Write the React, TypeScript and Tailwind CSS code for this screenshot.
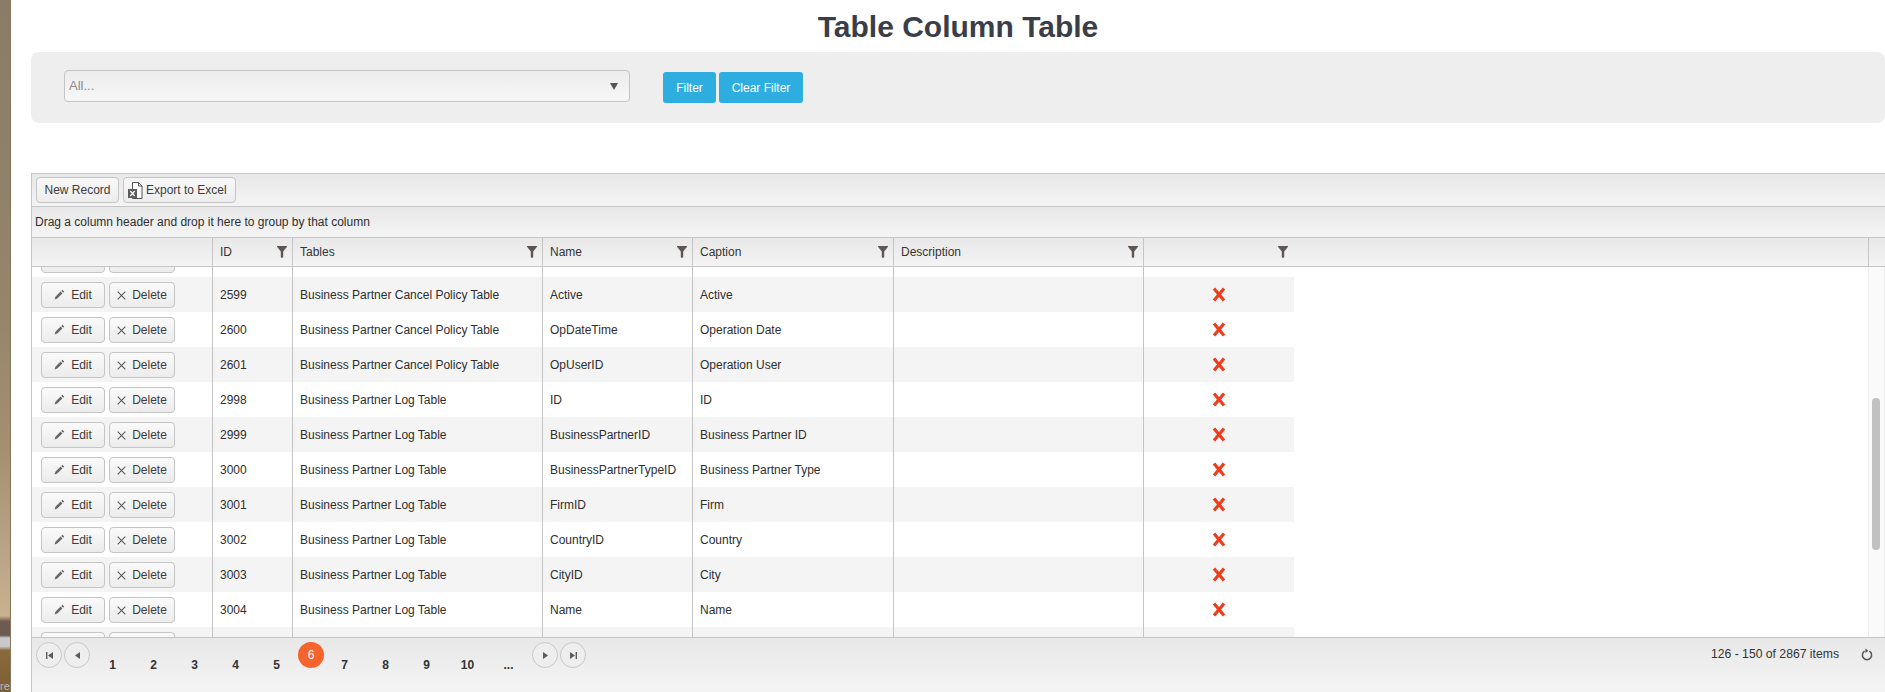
import type { ReactNode } from "react";

const cols = "grid grid-cols-[181px_80px_250px_150px_201px_250px_150px]";
const cellBorder = "border-r border-[#c5c5c5]";
const bar = "bg-gradient-to-b from-[#e9e8e9] to-[#f4f4f4]";

// first and last rows are scrolled almost out of view, only their button edges show
const rows: ([string, string, string, string] | null)[] = [
  null,
  ["2599", "Business Partner Cancel Policy Table", "Active", "Active"],
  ["2600", "Business Partner Cancel Policy Table", "OpDateTime", "Operation Date"],
  ["2601", "Business Partner Cancel Policy Table", "OpUserID", "Operation User"],
  ["2998", "Business Partner Log Table", "ID", "ID"],
  ["2999", "Business Partner Log Table", "BusinessPartnerID", "Business Partner ID"],
  ["3000", "Business Partner Log Table", "BusinessPartnerTypeID", "Business Partner Type"],
  ["3001", "Business Partner Log Table", "FirmID", "Firm"],
  ["3002", "Business Partner Log Table", "CountryID", "Country"],
  ["3003", "Business Partner Log Table", "CityID", "City"],
  ["3004", "Business Partner Log Table", "Name", "Name"],
  null,
];

function FilterIcon() {
  return (
    <svg width="10" height="12" viewBox="0 0 10 12" className="shrink-0">
      <path d="M0 0h10v.8L6.2 5.4V11.2L5 12 3.8 11.2V5.4L0 .8z" fill="#5c5654" />
    </svg>
  );
}

function PencilIcon() {
  return (
    <svg width="11" height="11" viewBox="0 0 11 11" className="shrink-0">
      <path d="M8.4.8l1.8 1.8-1.1 1.1-1.8-1.8zM6.6 2.6l1.8 1.8-5.2 5.2-2.6.8.8-2.6z" fill="#6a6462" />
    </svg>
  );
}

function CrossIcon() {
  return (
    <svg width="9" height="9" viewBox="0 0 9 9" className="shrink-0 translate-y-[1px]">
      <path d="M.7.7l7.6 7.6M8.3.7L.7 8.3" stroke="#5f5a58" strokeWidth="1.1" fill="none" />
    </svg>
  );
}

function RedX() {
  return (
    <svg width="14" height="15" viewBox="0 0 14 15">
      <path d="M2 1.5l5 6 5-6M2 13.5l5-6 5 6" stroke="#ee3d1c" strokeWidth="3.2" fill="none" />
    </svg>
  );
}

function ExcelIcon() {
  return (
    <svg width="15" height="17" viewBox="0 0 15 17" className="shrink-0">
      <path d="M4.5.5h6l3.5 3.5v12.5H4.5z" fill="#fbfbfb" stroke="#555" strokeWidth="1" />
      <path d="M10.5.5V4H14" fill="none" stroke="#555" strokeWidth="1" />
      <rect x="0" y="7" width="9" height="9" fill="#5b5b5b" />
      <path d="M2.3 9l4.4 5M6.7 9l-4.4 5" stroke="#fff" strokeWidth="1.3" fill="none" />
    </svg>
  );
}

function RefreshIcon() {
  return (
    <svg width="12" height="13" viewBox="0 0 12 13">
      <path d="M3.6 3.2A4.6 4.6 0 1 0 8.4 3.2" fill="none" stroke="#5a5553" strokeWidth="1.5" />
      <path d="M4.4 .6l3 2.2-3 2.2z" fill="#5a5553" />
    </svg>
  );
}

function GridButton({ children, width }: { children?: ReactNode; width: string }) {
  return (
    <button className={`${width} flex h-[26px] items-center justify-center gap-[6px] rounded-[4px] border border-[#c5c5c5] bg-gradient-to-b from-[#fafafa] to-[#ececec] text-xs text-[#3c3c3c]`}>
      {children}
    </button>
  );
}

function HeaderCell({ label, last }: { label?: string; last?: boolean }) {
  return (
    <div className={`flex h-full items-center justify-between pl-[7px] ${last ? "pr-[6px]" : `pr-[5px] ${cellBorder}`}`}>
      <span className="text-xs text-[#333]">{label}</span>
      <FilterIcon />
    </div>
  );
}

function Row({ row, striped }: { row: [string, string, string, string] | null; striped: boolean }) {
  const cell = `flex h-[35px] items-center pl-[7px] ${cellBorder}`;
  return (
    <div className={`${cols} w-fit text-xs text-[#2e2e2e] ${striped ? "bg-[#f4f4f4]" : "bg-white"}`}>
      <div className={`flex h-[35px] items-center gap-[4px] pl-[9px] ${cellBorder}`}>
        {row ? (
          <>
            <GridButton width="w-[64px]">
              <PencilIcon />
              Edit
            </GridButton>
            <GridButton width="w-[66px]">
              <CrossIcon />
              Delete
            </GridButton>
          </>
        ) : (
          <>
            <GridButton width="w-[64px]" />
            <GridButton width="w-[66px]" />
          </>
        )}
      </div>
      <div className={cell}>{row?.[0]}</div>
      <div className={cell}>{row?.[1]}</div>
      <div className={cell}>{row?.[2]}</div>
      <div className={cell}>{row?.[3]}</div>
      <div className={cell} />
      <div className="flex h-[35px] items-center justify-center">
        {row && <RedX />}
      </div>
    </div>
  );
}

function PagerArrow({ children }: { children: ReactNode }) {
  return (
    <button className="flex h-[26px] w-[26px] shrink-0 items-center justify-center rounded-full border border-[#c9c9c9] bg-[#eeeeee]">
      {children}
    </button>
  );
}

function PageNumber({ label }: { label: string }) {
  return (
    <span className="flex h-[26px] w-[41px] shrink-0 items-center justify-center pt-[19px] text-xs font-bold text-[#333]">
      {label}
    </span>
  );
}

export default function App() {
  return (
    <div className="flex h-[692px] overflow-hidden bg-white font-['Liberation_Sans',Arial,sans-serif]">
      <div className="flex w-[11px] shrink-0 flex-col justify-end overflow-hidden border-r border-[#85775f] bg-[linear-gradient(180deg,#8a7c66_0%,#94856b_45%,#a4906f_65%,#bda789_82%,#c9b28c_89%,#6d5a50_89.8%,#6d5a50_91.8%,#c9c9c9_92.2%,#c9c9c9_93.4%,#8a6a3a_94%,#7d5f34_100%)]">
        <span className="text-[11px] leading-[12px] text-[#bbb]">re</span>
      </div>

      <div className="flex min-w-0 flex-1 flex-col pl-[20px]">
        <h1 className="h-[52px] shrink-0 pt-[9px] text-center text-[30px] font-bold leading-[36px] text-[#3a3e49]">
          Table Column Table
        </h1>

        <div className="flex h-[71px] shrink-0 items-start rounded-[8px] bg-[#eeeeee] pl-[33px] pt-[18px]">
          <div className="flex h-[32px] w-[566px] items-center justify-between rounded-[4px] border border-[#c5c5c5] bg-gradient-to-b from-[#ececec] to-[#f7f7f7] pl-[4px] pr-[11px] text-[13px] text-[#8c8c8c]">
            <span>All...</span>
            <svg width="8" height="9" viewBox="0 0 8 9">
              <path d="M0 1h8L4 8z" fill="#555" />
            </svg>
          </div>
          <button className="ml-[33px] mt-[2px] h-[31px] w-[53px] rounded-[3px] bg-[#2eaee0] text-xs text-white">
            Filter
          </button>
          <button className="ml-[3px] mt-[2px] h-[31px] w-[84px] rounded-[3px] bg-[#2eaee0] text-xs text-white">
            Clear Filter
          </button>
        </div>

        <div className="mt-[50px] flex min-h-0 flex-1 flex-col border-l border-t border-[#c5c5c5]">
          <div className={`flex h-[33px] shrink-0 items-center gap-[4px] border-b border-[#c5c5c5] pl-[4px] ${bar}`}>
            <button className="h-[26px] w-[83px] rounded-[4px] border border-[#c5c5c5] bg-gradient-to-b from-[#f8f8f8] to-[#ededed] text-xs text-[#3c3c3c]">
              New Record
            </button>
            <button className="flex h-[26px] w-[113px] items-center gap-[3px] rounded-[4px] border border-[#c5c5c5] bg-gradient-to-b from-[#f8f8f8] to-[#ededed] pl-[4px] text-xs text-[#3c3c3c]">
              <ExcelIcon />
              Export to Excel
            </button>
          </div>

          <div className={`flex h-[31px] shrink-0 items-center border-b border-[#c5c5c5] pl-[3px] text-xs text-[#2e2e2e] ${bar}`}>
            Drag a column header and drop it here to group by that column
          </div>

          <div className={`flex h-[29px] shrink-0 border-b border-[#c5c5c5] ${bar}`}>
            <div className={`${cols} h-full`}>
              <div className={cellBorder} />
              <HeaderCell label="ID" />
              <HeaderCell label="Tables" />
              <HeaderCell label="Name" />
              <HeaderCell label="Caption" />
              <HeaderCell label="Description" />
              <HeaderCell last />
            </div>
            <div className={`flex-1 ${cellBorder}`} />
            <div className="w-[16px] shrink-0" />
          </div>

          <div className="flex h-[370px] shrink-0 overflow-hidden">
            <div className="min-w-0 flex-1 overflow-hidden">
              <div className="-mt-[25px]">
                {rows.map((row, index) => (
                  <Row key={index} row={row} striped={index % 2 === 1} />
                ))}
              </div>
            </div>
            <div className="w-[17px] shrink-0 border-x border-[#ececec] bg-[#fafafa] pl-[3px] pt-[131px]">
              <div className="h-[152px] w-[8px] rounded-full bg-[#c1c1c1]" />
            </div>
          </div>

          <div className={`flex min-h-0 flex-1 items-start border-t border-[#c5c5c5] pl-[4px] pr-[12px] pt-[4px] ${bar}`}>
            <div className="flex items-start">
              <PagerArrow>
                <svg width="9" height="9" viewBox="0 0 9 9">
                  <path d="M1 1h1.4v7H1zM8 1v7L3 4.5z" fill="#5f5a58" />
                </svg>
              </PagerArrow>
              <div className="ml-[2px]">
                <PagerArrow>
                  <svg width="7" height="9" viewBox="0 0 7 9">
                    <path d="M6 1v7L1 4.5z" fill="#5f5a58" />
                  </svg>
                </PagerArrow>
              </div>
              <div className="ml-[2px] flex items-start">
                {["1", "2", "3", "4", "5"].map((page) => (
                  <PageNumber key={page} label={page} />
                ))}
                <span className="ml-[1px] flex h-[26px] w-[26px] shrink-0 items-center justify-center rounded-full bg-[#f4642c] text-xs text-white">
                  6
                </span>
                {["7", "8", "9", "10", "..."].map((page) => (
                  <PageNumber key={page} label={page} />
                ))}
              </div>
              <div className="ml-[3px]">
                <PagerArrow>
                  <svg width="7" height="9" viewBox="0 0 7 9">
                    <path d="M1 1v7l5-3.5z" fill="#5f5a58" />
                  </svg>
                </PagerArrow>
              </div>
              <div className="ml-[2px]">
                <PagerArrow>
                  <svg width="9" height="9" viewBox="0 0 9 9">
                    <path d="M1 1v7l5-3.5zM6.6 1H8v7H6.6z" fill="#5f5a58" />
                  </svg>
                </PagerArrow>
              </div>
            </div>
            <div className="ml-auto flex items-center pt-[3px] text-[12.2px] text-[#333]">
              <span>126 - 150 of 2867 items</span>
              <span className="ml-[22px]">
                <RefreshIcon />
              </span>
            </div>
          </div>
        </div>
      </div>
    </div>
  );
}
